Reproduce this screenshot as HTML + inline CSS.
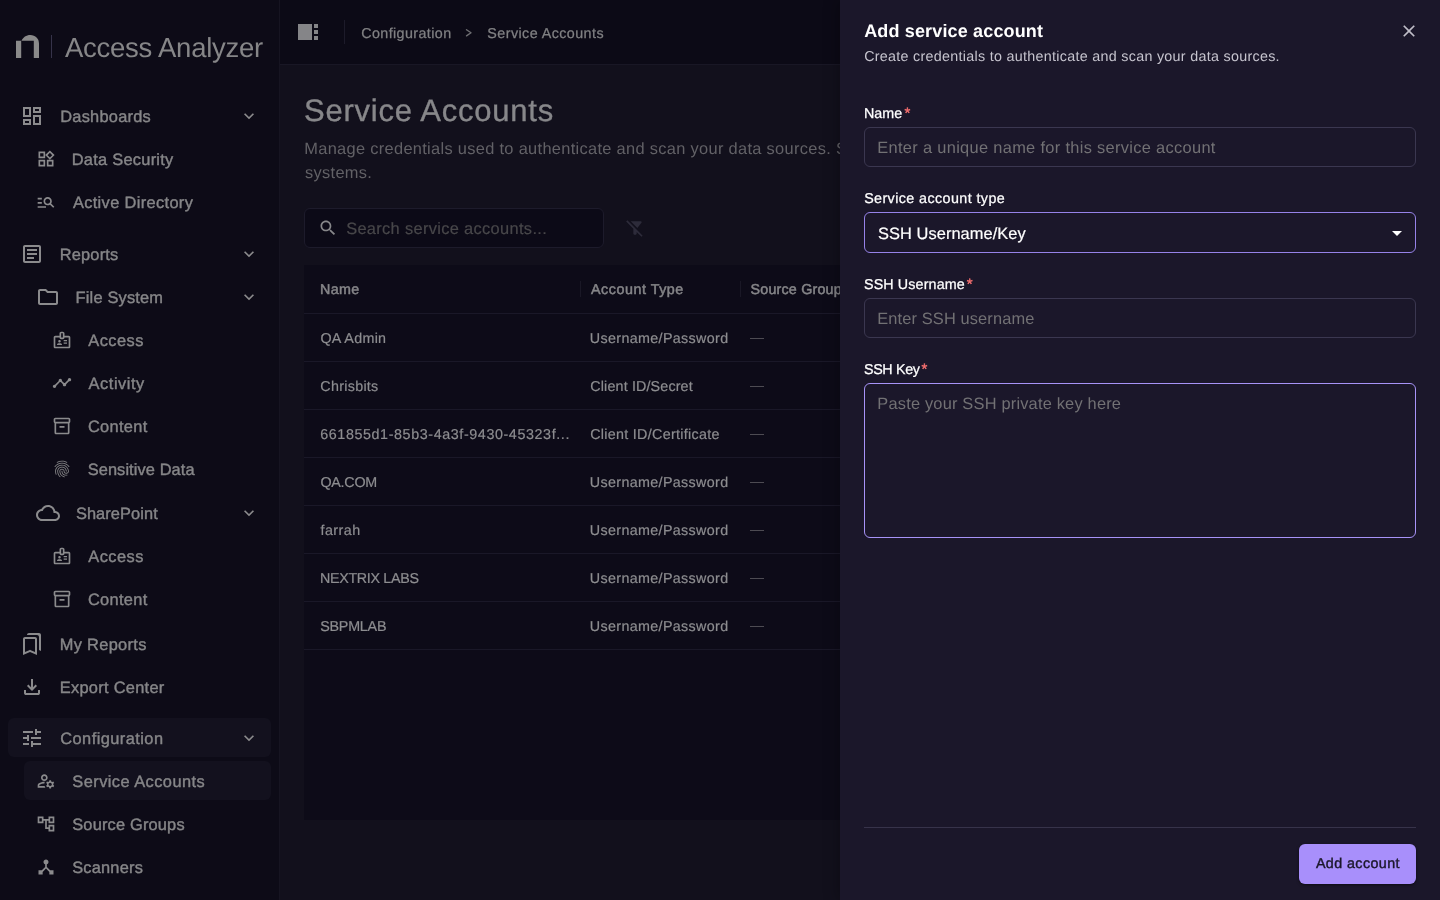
<!DOCTYPE html>
<html lang="en"><head><meta charset="utf-8"><title>Access Analyzer - Service Accounts</title>
<style>
*{box-sizing:border-box;margin:0;padding:0}
html,body{width:1440px;height:900px;overflow:hidden;background:#12101c;font-family:"Liberation Sans",sans-serif;text-rendering:geometricPrecision}
#root{position:absolute;left:0;top:0;width:1440px;height:900px;will-change:transform}
.t{position:absolute;white-space:nowrap;}
.ic{position:absolute;display:block}
#sidebar{position:absolute;left:0;top:0;width:280px;height:900px;background:#0d0b17;border-right:1px solid #161421;color:#8b8b8d;overflow:hidden}
.sbt{font-size:16.4px;line-height:38px;height:38px;font-weight:400;color:#868688;-webkit-text-stroke:0.4px #868688}
.hl{position:absolute;height:38.5px;border-radius:6px;background:#13111e}
#topbar{position:absolute;left:280px;top:0;width:1160px;height:65px;background:#0c0a16;border-bottom:1px solid #191725;color:#858588}
#main{position:absolute;left:280px;top:65px;width:1160px;height:835px;background:#12101c;overflow:hidden}
.bc{font-size:14.3px;line-height:20px;color:#808083;top:23.75px;-webkit-text-stroke:0.25px #808083}
#title{left:24px;top:27.5px;font-size:31px;line-height:36px;color:#87878a;-webkit-text-stroke:0.35px #87878a}
.desc{left:24px;font-size:16.4px;line-height:24px;color:#626166}
#search{position:absolute;left:24px;top:143px;width:300px;height:40px;border:1px solid #1d1b2b;border-radius:6px;background:#0c0a17}
#search .t{left:42px;top:0.9px;line-height:38px;font-size:16.4px;color:#48474a;-webkit-text-stroke:0.2px #48474a}
#table{position:absolute;left:24px;top:200px;width:1112px;height:555px;background:#0d0b18;overflow:hidden}
.th{font-size:14.3px;font-weight:400;color:#858588;line-height:48px;top:0.5px;-webkit-text-stroke:0.5px #858588}
.row{position:absolute;left:0;width:100%;height:1px;background:#1a1828}
.cell{font-size:14.3px;line-height:46px;color:#8d8d90;-webkit-text-stroke:0.2px #8d8d90}
.dsh{color:#535258;-webkit-text-stroke:0;font-size:14px}
.sep{position:absolute;top:16px;width:1.5px;height:16px;background:#1a1826}
#drawer{position:absolute;left:840px;top:0;width:600px;height:900px;background:#1b172a;color:#fff;box-shadow:-2px 0 14px rgba(0,0,0,0.28)}
.lbl{font-size:14.3px;line-height:20px;font-weight:400;color:#fff;left:24px;-webkit-text-stroke:0.25px #fff}
.req{color:#f56f6f;-webkit-text-stroke:0.4px #f56f6f;font-size:15px;line-height:10px;position:relative;top:0.5px;letter-spacing:0;margin-left:2px}
.inp{position:absolute;left:24px;width:552px;height:40px;border:1px solid #3b3750;border-radius:6px;}
.inp .t{left:13px;top:0.5px;line-height:38px;font-size:16.4px;color:#727174}
.focus{border:1px solid #9682e8}
#btn{position:absolute;left:459px;top:844px;width:117px;height:40px;border-radius:6px;background:#a88ffb;box-shadow:0 1px 3px rgba(0,0,0,.5)}
#btn .t{left:16px;top:0.2px;line-height:40px;font-size:14.3px;color:#1b172a;-webkit-text-stroke:0.4px #1b172a}
</style></head>
<body>
<div id="root">
<div id="sidebar">
<svg class="ic" style="left:0;top:0" width="64" height="64" viewBox="0 0 64 64" fill="#8a8a8a"><path d="M16 40.7h5.2V58H16z M21.5 40.8C23 37.300 26.200 35 30.300 35 35.500 35 39 38.600 39 43.500V58h-5.200V40.800z"/></svg>
<div style="position:absolute;left:51px;top:35px;width:1px;height:23px;background:#36334a"></div>
<span class="t" id="brand" style="left:64px;top:28.5px;font-size:27.5px;line-height:38px;color:#868688;letter-spacing:-0.247px;margin-left:0.97px;">Access Analyzer</span>
<svg class="ic" style="left:20px;top:104.0px" width="24" height="24" viewBox="0 0 24 24" fill="currentColor"><path d="M19 5v2h-4V5h4M9 5v6H5V5h4m10 8v6h-4v-6h4M9 17v2H5v-2h4M21 3h-8v6h8V3zM11 3H3v10h8V3zm10 8h-8v10h8V11zm-10 4H3v6h8v-6z"/></svg>
<span class="t sbt" id="sb0" style="left:60px;top:97.75px;letter-spacing:0.243px;margin-left:0.22px;">Dashboards</span>
<svg class="ic" style="left:239px;top:106px" width="20" height="20" viewBox="0 0 24 24" fill="currentColor"><path d="M16.590 8.590L12 13.170 7.410 8.590 6 10l6 6 6-6z"/></svg>
<svg class="ic" style="left:36px;top:149.0px" width="20" height="20" viewBox="0 0 24 24" fill="currentColor"><path d="M16.66 4.52l2.83 2.83-2.83 2.83-2.83-2.83 2.83-2.83M9 5v4H5V5h4m10 10v4h-4v-4h4M9 15v4H5v-4h4m7.66-13.31L11 7.34 16.66 13l5.66-5.66-5.66-5.65zM11 3H3v8h8V3zm10 10h-8v8h8v-8zm-10 0H3v8h8v-8z"/></svg>
<span class="t sbt" id="sb1" style="left:72px;top:140.75px;letter-spacing:0.273px;margin-left:-0.36px;">Data Security</span>
<svg class="ic" style="left:36px;top:192.0px" width="20" height="20" viewBox="0 0 24 24" fill="currentColor"><path d="M7 9H2V7h5v2zm0 3H2v2h5v-2zm13.59 7l-3.83-3.83c-.8.52-1.74.83-2.76.83-2.76 0-5-2.24-5-5s2.24-5 5-5 5 2.24 5 5c0 1.02-.31 1.96-.83 2.75L22 17.59 20.59 19zM17 11c0-1.65-1.35-3-3-3s-3 1.35-3 3 1.35 3 3 3 3-1.35 3-3zM2 19h10v-2H2v2z"/></svg>
<span class="t sbt" id="sb2" style="left:72px;top:183.75px;letter-spacing:0.345px;margin-left:0.91px;">Active Directory</span>
<svg class="ic" style="left:20px;top:242.0px" width="24" height="24" viewBox="0 0 24 24" fill="currentColor"><path d="M19 5v14H5V5h14m0-2H5c-1.1 0-2 .9-2 2v14c0 1.1.9 2 2 2h14c1.1 0 2-.9 2-2V5c0-1.1-.9-2-2-2zm-5 14H7v-2h7v2zm3-4H7v-2h10v2zm0-4H7V7h10v2z"/></svg>
<span class="t sbt" id="sb3" style="left:60px;top:235.75px;letter-spacing:0.185px;margin-left:-0.28px;">Reports</span>
<svg class="ic" style="left:239px;top:244px" width="20" height="20" viewBox="0 0 24 24" fill="currentColor"><path d="M16.590 8.590L12 13.170 7.410 8.590 6 10l6 6 6-6z"/></svg>
<svg class="ic" style="left:36px;top:285.0px" width="24" height="24" viewBox="0 0 24 24" fill="currentColor"><path d="M9.17 6l2 2H20v10H4V6h5.17M10 4H4c-1.1 0-1.99.9-1.99 2L2 18c0 1.1.9 2 2 2h16c1.1 0 2-.9 2-2V8c0-1.1-.9-2-2-2h-8l-2-2z"/></svg>
<span class="t sbt" id="sb4" style="left:76px;top:278.75px;letter-spacing:0.181px;margin-left:-0.43px;">File System</span>
<svg class="ic" style="left:239px;top:287px" width="20" height="20" viewBox="0 0 24 24" fill="currentColor"><path d="M16.590 8.590L12 13.170 7.410 8.590 6 10l6 6 6-6z"/></svg>
<svg class="ic" style="left:52px;top:330.0px" width="20" height="20" viewBox="0 0 24 24" fill="currentColor"><path d="M14 12h4v1.5h-4zm0 3h4v1.5h-4zM20 7h-5V4c0-1.1-.9-2-2-2h-2c-1.1 0-2 .9-2 2v3H4c-1.1 0-2 .9-2 2v11c0 1.1.9 2 2 2h16c1.1 0 2-.9 2-2V9c0-1.1-.9-2-2-2zm-9-3h2v5h-2V4zm9 16H4V9h5c0 1.1.9 2 2 2h2c1.1 0 2-.9 2-2h5v11zM9 15c.83 0 1.5-.67 1.5-1.5S9.83 12 9 12s-1.5.67-1.5 1.5S8.17 15 9 15zm2.08 1.18c-.64-.28-1.34-.43-2.08-.43s-1.44.15-2.08.43c-.56.24-.92.78-.92 1.39V18h6v-.43c0-.61-.36-1.15-.92-1.39z"/></svg>
<span class="t sbt" id="sb5" style="left:88px;top:321.75px;letter-spacing:0.433px;margin-left:0.37px;">Access</span>
<svg class="ic" style="left:52px;top:373.0px" width="20" height="20" viewBox="0 0 24 24" fill="currentColor"><path d="M23 8c0 1.1-.9 2-2 2-.18 0-.35-.02-.51-.07l-3.56 3.55c.05.16.07.34.07.52 0 1.1-.9 2-2 2s-2-.9-2-2c0-.18.02-.36.07-.52l-2.55-2.55c-.16.05-.34.07-.52.07s-.36-.02-.52-.07l-4.55 4.56c.05.16.07.33.07.51 0 1.1-.9 2-2 2s-2-.9-2-2 .9-2 2-2c.18 0 .35.02.51.07l4.56-4.55C8.020 9.36 8 9.18 8 9c0-1.1.9-2 2-2s2 .9 2 2c0 .18-.02.36-.07.52l2.55 2.55c.16-.05.34-.07.52-.07s.36.02.52.07l3.55-3.56C19.020 8.35 19 8.18 19 8c0-1.1.9-2 2-2s2 .9 2 2z"/></svg>
<span class="t sbt" id="sb6" style="left:88px;top:364.75px;letter-spacing:0.537px;margin-left:0.62px;">Activity</span>
<svg class="ic" style="left:52px;top:416.0px" width="20" height="20" viewBox="0 0 24 24" fill="currentColor"><path d="M20 2H4c-1 0-2 .9-2 2v3.010c0 .72.43 1.34 1 1.69V20c0 1.1 1.1 2 2 2h14c.9 0 2-.9 2-2V8.700c.57-.35 1-.97 1-1.69V4c0-1.1-1-2-2-2zm-1 18H5V9h14v11zm1-13H4V4h16v3zM9 12h6v2H9z"/></svg>
<span class="t sbt" id="sb7" style="left:88px;top:407.75px;letter-spacing:0.331px;margin-left:-0.09px;">Content</span>
<svg class="ic" style="left:52px;top:459.0px" width="20" height="20" viewBox="0 0 24 24" fill="currentColor"><path d="M17.81 4.47c-.08 0-.16-.02-.23-.06C15.66 3.42 14 3 12.01 3c-1.98 0-3.86.47-5.570 1.410-.24.13-.54.04-.68-.2-.13-.24-.04-.55.2-.68C7.820 2.520 9.860 2 12.010 2c2.130 0 3.990.47 6.030 1.520.25.13.34.43.21.67-.09.18-.26.28-.44.28zM3.5 9.720c-.1 0-.2-.03-.29-.09-.23-.16-.28-.47-.12-.7.99-1.400 2.250-2.500 3.750-3.270C9.980 4.040 14 4.030 17.150 5.650c1.500.77 2.760 1.860 3.750 3.250.16.22.11.54-.12.7-.23.16-.54.11-.7-.12-.9-1.260-2.040-2.250-3.390-2.940-2.870-1.470-6.540-1.470-9.400.01-1.360.7-2.500 1.700-3.400 2.960-.8.14-.23.21-.39.21zm6.250 12.070c-.13 0-.26-.05-.35-.15-.87-.87-1.340-1.430-2.010-2.640-.69-1.230-1.050-2.730-1.050-4.340 0-2.970 2.540-5.390 5.660-5.390s5.660 2.420 5.660 5.390c0 .28-.22.5-.5.5s-.5-.22-.5-.5c0-2.420-2.090-4.390-4.660-4.390-2.570 0-4.660 1.970-4.660 4.390 0 1.440.32 2.770.93 3.850.64 1.150 1.080 1.640 1.850 2.420.19.2.19.51 0 .71-.11.1-.24.15-.37.15zm7.170-1.850c-1.190 0-2.240-.3-3.100-.89-1.490-1.010-2.380-2.650-2.380-4.390 0-.28.22-.5.5-.5s.5.22.5.5c0 1.410.72 2.740 1.940 3.560.71.48 1.540.71 2.540.71.24 0 .64-.03 1.040-.1.27-.05.53.13.58.41.05.27-.13.53-.41.58-.57.11-1.070.12-1.210.12zM14.91 22c-.04 0-.09-.01-.13-.02-1.590-.44-2.630-1.030-3.720-2.100-1.400-1.390-2.170-3.240-2.170-5.220 0-1.620 1.380-2.940 3.080-2.940 1.700 0 3.080 1.320 3.080 2.940 0 1.070.93 1.940 2.080 1.940s2.080-.87 2.080-1.940c0-3.770-3.250-6.830-7.250-6.830-2.840 0-5.440 1.580-6.610 4.030-.39.81-.59 1.760-.59 2.800 0 .78.07 2.010.67 3.610.1.26-.03.55-.29.64-.26.1-.55-.04-.64-.29-.49-1.310-.73-2.610-.73-3.960 0-1.200.23-2.290.68-3.240 1.330-2.790 4.280-4.600 7.510-4.600 4.550 0 8.250 3.510 8.250 7.830 0 1.620-1.380 2.940-3.080 2.940s-3.080-1.320-3.080-2.940c0-1.070-.93-1.940-2.080-1.940s-2.080.87-2.080 1.940c0 1.710.66 3.310 1.870 4.510.95.94 1.860 1.460 3.270 1.850.27.07.42.35.35.61-.05.23-.26.38-.47.38z"/></svg>
<span class="t sbt" id="sb8" style="left:88px;top:450.75px;letter-spacing:0.091px;margin-left:-0.35px;">Sensitive Data</span>
<svg class="ic" style="left:36px;top:501.0px" width="24" height="24" viewBox="0 0 24 24" fill="currentColor"><path d="M19.35 10.040C18.67 6.590 15.64 4 12 4 9.110 4 6.600 5.640 5.350 8.040 2.340 8.360 0 10.910 0 14c0 3.310 2.690 6 6 6h13c2.760 0 5-2.240 5-5 0-2.640-2.050-4.780-4.650-4.960zM19 18H6c-2.210 0-4-1.790-4-4s1.790-4 4-4h.710C7.370 7.690 9.480 6 12 6c3.040 0 5.500 2.460 5.500 5.500v.5H19c1.660 0 3 1.340 3 3s-1.340 3-3 3z"/></svg>
<span class="t sbt" id="sb9" style="left:76px;top:494.75px;letter-spacing:0.077px;margin-left:-0.08px;">SharePoint</span>
<svg class="ic" style="left:239px;top:503px" width="20" height="20" viewBox="0 0 24 24" fill="currentColor"><path d="M16.590 8.590L12 13.170 7.410 8.590 6 10l6 6 6-6z"/></svg>
<svg class="ic" style="left:52px;top:546.0px" width="20" height="20" viewBox="0 0 24 24" fill="currentColor"><path d="M14 12h4v1.5h-4zm0 3h4v1.5h-4zM20 7h-5V4c0-1.1-.9-2-2-2h-2c-1.1 0-2 .9-2 2v3H4c-1.1 0-2 .9-2 2v11c0 1.1.9 2 2 2h16c1.1 0 2-.9 2-2V9c0-1.1-.9-2-2-2zm-9-3h2v5h-2V4zm9 16H4V9h5c0 1.1.9 2 2 2h2c1.1 0 2-.9 2-2h5v11zM9 15c.83 0 1.5-.67 1.5-1.5S9.83 12 9 12s-1.5.67-1.5 1.5S8.17 15 9 15zm2.08 1.18c-.64-.28-1.34-.43-2.08-.43s-1.44.15-2.08.43c-.56.24-.92.78-.92 1.39V18h6v-.43c0-.61-.36-1.15-.92-1.39z"/></svg>
<span class="t sbt" id="sb10" style="left:88px;top:537.75px;letter-spacing:0.433px;margin-left:0.37px;">Access</span>
<svg class="ic" style="left:52px;top:589.0px" width="20" height="20" viewBox="0 0 24 24" fill="currentColor"><path d="M20 2H4c-1 0-2 .9-2 2v3.010c0 .72.43 1.34 1 1.69V20c0 1.1 1.1 2 2 2h14c.9 0 2-.9 2-2V8.700c.57-.35 1-.97 1-1.69V4c0-1.1-1-2-2-2zm-1 18H5V9h14v11zm1-13H4V4h16v3zM9 12h6v2H9z"/></svg>
<span class="t sbt" id="sb11" style="left:88px;top:580.75px;letter-spacing:0.331px;margin-left:-0.09px;">Content</span>
<svg class="ic" style="left:20px;top:632.0px" width="24" height="24" viewBox="0 0 24 24" fill="currentColor"><path d="M15 7v12.970l-4.210-1.810-.79-.34-.79.34L5 19.970V7h10m4-6H8.990C7.890 1 7 1.900 7 3h10c1.100 0 2 .9 2 2v13l2 1V3c0-1.100-.9-2-2-2zm-4 4H5c-1.100 0-2 .9-2 2v16l7-3 7 3V7c0-1.100-.9-2-2-2z"/></svg>
<span class="t sbt" id="sb12" style="left:60px;top:625.75px;letter-spacing:0.315px;margin-left:-0.26px;">My Reports</span>
<svg class="ic" style="left:20px;top:675.0px" width="24" height="24" viewBox="0 0 24 24" fill="currentColor"><path d="M12 16l-5-5 1.400-1.450 2.600 2.600V4h2v8.150l2.600-2.600L17 11zm-6 4q-.825 0-1.412-.587T4 18v-3h2v3h12v-3h2v3q0 .825-.587 1.413T18 20z"/></svg>
<span class="t sbt" id="sb13" style="left:60px;top:668.75px;letter-spacing:0.288px;margin-left:-0.25px;">Export Center</span>
<div class="hl" style="left:8px;top:718.25px;width:263px"></div>
<svg class="ic" style="left:20px;top:726.0px" width="24" height="24" viewBox="0 0 24 24" fill="currentColor"><path d="M3 17v2h6v-2H3zM3 5v2h10V5H3zm10 16v-2h8v-2h-8v-2h-2v6h2zM7 9v2H3v2h4v2h2V9H7zm14 4v-2H11v2h10zm-6-4h2V7h4V5h-4V3h-2v6z"/></svg>
<span class="t sbt" id="sb14" style="left:60px;top:719.75px;letter-spacing:0.438px;margin-left:0.29px;">Configuration</span>
<svg class="ic" style="left:239px;top:728px" width="20" height="20" viewBox="0 0 24 24" fill="currentColor"><path d="M16.590 8.590L12 13.170 7.410 8.590 6 10l6 6 6-6z"/></svg>
<div class="hl" style="left:24px;top:761.25px;width:247px"></div>
<svg class="ic" style="left:36px;top:771.0px" width="20" height="20" viewBox="0 0 24 24" fill="currentColor"><path d="M4 18v-.65c0-.34.16-.66.41-.81C6.100 15.530 8.030 15 10 15c.03 0 .05 0 .08.010.1-.7.3-1.370.59-1.980-.22-.02-.44-.03-.67-.03-2.420 0-4.680.67-6.610 1.820-.88.520-1.390 1.500-1.390 2.530V20h9.260c-.42-.6-.75-1.280-.97-2H4zm6-6c2.210 0 4-1.790 4-4s-1.790-4-4-4-4 1.790-4 4 1.790 4 4 4zm0-6c1.100 0 2 .9 2 2s-.9 2-2 2-2-.9-2-2 .9-2 2-2zm10.750 10c0-.22-.03-.42-.06-.63l1.140-1.010-1-1.730-1.450.49c-.32-.27-.68-.48-1.080-.63L18 11h-2l-.3 1.490c-.4.15-.76.36-1.080.63l-1.450-.49-1 1.730 1.140 1.010c-.03.21-.06.41-.06.63s.03.420.06.630l-1.140 1.010 1 1.730 1.450-.49c.32.27.68.48 1.080.63L16 21h2l.3-1.490c.4-.15.76-.36 1.080-.63l1.450.49 1-1.730-1.140-1.010c.03-.21.06-.41.06-.63zM17 18c-1.100 0-2-.9-2-2s.9-2 2-2 2 .9 2 2-.9 2-2 2z"/></svg>
<span class="t sbt" id="sb15" style="left:72px;top:762.75px;letter-spacing:0.453px;margin-left:0.28px;">Service Accounts</span>
<svg class="ic" style="left:36px;top:814.0px" width="20" height="20" viewBox="0 0 24 24" fill="currentColor"><path d="M22 11V3h-7v3H9V3H2v8h7V8h2v10h4v3h7v-8h-7v3h-2V8h2v3h7zM7 9H4V5h3v4zm10 6h3v4h-3v-4zm0-10h3v4h-3V5z"/></svg>
<span class="t sbt" id="sb16" style="left:72px;top:805.75px;letter-spacing:0.177px;margin-left:0.26px;">Source Groups</span>
<svg class="ic" style="left:36px;top:857.0px" width="20" height="20" viewBox="0 0 24 24" fill="currentColor"><path d="M17 16l-4-4V8.820C14.160 8.400 15 7.300 15 6c0-1.660-1.340-3-3-3S9 4.340 9 6c0 1.300.84 2.400 2 2.820V12l-4 4H3v5h5v-3.050l4-4.200 4 4.200V21h5v-5h-4z"/></svg>
<span class="t sbt" id="sb17" style="left:72px;top:848.75px;letter-spacing:0.197px;margin-left:0.21px;">Scanners</span>
</div>
<div id="topbar">
<svg class="ic" style="left:18px;top:24px" width="20" height="16" viewBox="0 0 20 16" fill="#858588"><rect x="0" y="0" width="14" height="16"/><rect x="16" y="0" width="4" height="4"/><rect x="16" y="6" width="4" height="4"/><rect x="16" y="12" width="4" height="4"/></svg>
<div style="position:absolute;left:64px;top:20px;width:1px;height:24px;background:#1d1b2a"></div>
<span class="t bc" id="bc1" style="left:81px;letter-spacing:0.406px;margin-left:0.20px;">Configuration</span>
<svg class="ic" style="left:180px;top:24px" width="16" height="16" viewBox="0 0 16 16" fill="none" stroke="#6f6f73" stroke-width="1.35" stroke-linecap="round" stroke-linejoin="round"><path d="M6.5 5.7L11 8.800 6.5 11.900"/></svg>
<span class="t bc" id="bc2" style="left:207px;letter-spacing:0.437px;margin-left:0.33px;">Service Accounts</span>
</div>
<div id="main">
<span class="t" id="title" style="letter-spacing:0.756px;margin-left:0.06px;">Service Accounts</span>
<span class="t desc" style="top:71.75px;letter-spacing:0.314px;margin-left:0.27px;"><span id="d1">Manage credentials used to authenticate and scan your data sources.</span> Service accounts connect to your</span>
<span class="t desc" id="d2" style="top:95.75px;letter-spacing:0.319px;margin-left:0.97px;">systems.</span>
<div id="search"><svg class="ic" style="left:12.5px;top:9px" width="20" height="20" viewBox="0 0 24 24" fill="#87878a"><path d="M15.5 14h-.79l-.28-.27C15.410 12.590 16 11.110 16 9.500 16 5.910 13.090 3 9.500 3S3 5.910 3 9.500 5.910 16 9.500 16c1.610 0 3.090-.59 4.230-1.570l.27.28v.79l5 4.990L20.490 19l-4.990-5zm-6 0C7.010 14 5 11.990 5 9.500S7.010 5 9.500 5 14 7.010 14 9.500 11.990 14 9.500 14z"/></svg><span class="t" id="sph" style="letter-spacing:0.335px;margin-left:-0.88px;">Search service accounts...</span></div>
<svg class="ic" style="left:345px;top:153px" width="20" height="20" viewBox="0 0 24 24" fill="#2d2b3a"><path d="M19.790 5.610C20.300 4.950 19.830 4 19 4H6.830l7.970 7.970 4.990-6.360zM2.810 2.810L1.390 4.220 10 13v6c0 .55.45 1 1 1h2c.55 0 1-.45 1-1v-2.170l5.780 5.780 1.410-1.410L2.810 2.810z"/></svg>
<div id="table">
<span class="t th" id="th1" style="left:16px;letter-spacing:0.314px;margin-left:0.06px;">Name</span>
<span class="t th" id="th2" style="left:286px;letter-spacing:0.540px;margin-left:0.96px;">Account Type</span>
<span class="t th" style="left:446px;letter-spacing:0.196px;margin-left:0.54px;">Source Groups</span>
<div class="sep" style="left:275.5px"></div><div class="sep" style="left:435.5px"></div>
<div class="row" style="top:48px"></div>
<span class="t cell" id="rn0" style="left:16px;top:51px;letter-spacing:0.302px;margin-left:0.38px;">QA Admin</span>
<span class="t cell" id="rt0" style="left:286px;top:51px;letter-spacing:0.354px;margin-left:-0.23px;">Username/Password</span>
<span class="t cell dsh" style="left:446px;top:49px">&mdash;</span>
<div class="row" style="top:96px"></div>
<span class="t cell" id="rn1" style="left:16px;top:99px;letter-spacing:0.289px;margin-left:0.34px;">Chrisbits</span>
<span class="t cell" id="rt1" style="left:286px;top:99px;letter-spacing:0.152px;margin-left:0.30px;">Client ID/Secret</span>
<span class="t cell dsh" style="left:446px;top:97px">&mdash;</span>
<div class="row" style="top:144px"></div>
<span class="t cell" id="rn2" style="left:16px;top:147px;letter-spacing:0.607px;margin-left:0.21px;">661855d1-85b3-4a3f-9430-45323f...</span>
<span class="t cell" id="rt2" style="left:286px;top:147px;letter-spacing:0.300px;margin-left:0.23px;">Client ID/Certificate</span>
<span class="t cell dsh" style="left:446px;top:145px">&mdash;</span>
<div class="row" style="top:192px"></div>
<span class="t cell" id="rn3" style="left:16px;top:195px;letter-spacing:-0.226px;margin-left:0.38px;">QA.COM</span>
<span class="t cell" id="rt3" style="left:286px;top:195px;letter-spacing:0.354px;margin-left:-0.23px;">Username/Password</span>
<span class="t cell dsh" style="left:446px;top:193px">&mdash;</span>
<div class="row" style="top:240px"></div>
<span class="t cell" id="rn4" style="left:16px;top:243px;letter-spacing:0.446px;margin-left:0.51px;">farrah</span>
<span class="t cell" id="rt4" style="left:286px;top:243px;letter-spacing:0.354px;margin-left:-0.23px;">Username/Password</span>
<span class="t cell dsh" style="left:446px;top:241px">&mdash;</span>
<div class="row" style="top:288px"></div>
<span class="t cell" id="rn5" style="left:16px;top:291px;letter-spacing:-0.317px;margin-left:-0.06px;">NEXTRIX LABS</span>
<span class="t cell" id="rt5" style="left:286px;top:291px;letter-spacing:0.354px;margin-left:-0.23px;">Username/Password</span>
<span class="t cell dsh" style="left:446px;top:289px">&mdash;</span>
<div class="row" style="top:336px"></div>
<span class="t cell" id="rn6" style="left:16px;top:339px;letter-spacing:-0.204px;margin-left:0.18px;">SBPMLAB</span>
<span class="t cell" id="rt6" style="left:286px;top:339px;letter-spacing:0.354px;margin-left:-0.23px;">Username/Password</span>
<span class="t cell dsh" style="left:446px;top:337px">&mdash;</span>
<div class="row" style="top:384px"></div>
</div>
</div>
<div id="drawer">
<span class="t" id="dt" style="left:24px;top:17px;font-size:18px;line-height:28px;font-weight:700;letter-spacing:0.156px;margin-left:0.14px;">Add service account</span>
<span class="t" id="ds" style="left:24px;top:46.9px;font-size:14.3px;line-height:20px;color:#c6c4ce;letter-spacing:0.296px;margin-left:0.13px;">Create credentials to authenticate and scan your data sources.</span>
<svg class="ic" style="left:559px;top:21px" width="20" height="20" viewBox="0 0 24 24" fill="#c0bec8"><path d="M19 6.410L17.590 5 12 10.590 6.410 5 5 6.410 10.590 12 5 17.590 6.410 19 12 13.410 17.590 19 19 17.590 13.410 12z"/></svg>
<span class="t lbl" style="top:103.7px;letter-spacing:0.087px;margin-left:-0.09px;"><span id="l1">Name</span><span class="req">*</span></span>
<div class="inp" style="top:127px"><span class="t" id="p1" style="letter-spacing:0.319px;margin-left:-0.70px;">Enter a unique name for this service account</span></div>
<span class="t lbl" id="l2" style="top:188.8px;letter-spacing:0.416px;margin-left:0.13px;">Service account type</span>
<div class="inp focus" style="top:212px;height:41px"><span class="t" id="p2" style="color:#fff;-webkit-text-stroke:0.2px #fff;top:2px;line-height:39px;letter-spacing:0.059px;margin-left:0.08px;">SSH Username/Key</span>
<svg class="ic" style="left:520px;top:8px" width="24" height="24" viewBox="0 0 24 24" fill="#fff"><path d="M7 10l5 5 5-5z"/></svg></div>
<span class="t lbl" style="top:274.75px;letter-spacing:0.131px;margin-left:-0.04px;"><span id="l3">SSH Username</span><span class="req">*</span></span>
<div class="inp" style="top:298px"><span class="t" id="p3" style="letter-spacing:0.123px;margin-left:-0.70px;">Enter SSH username</span></div>
<span class="t lbl" style="top:359.75px;letter-spacing:-0.349px;margin-left:-0.01px;"><span id="l4">SSH Key</span><span class="req">*</span></span>
<div class="inp focus" style="top:383px;height:155px;border-color:#a793f7"><span class="t" id="p4" style="top:1px;line-height:38px;letter-spacing:0.196px;margin-left:-0.70px;">Paste your SSH private key here</span></div>
<div style="position:absolute;left:24px;top:827px;width:552px;height:1px;background:#37334a"></div>
<div id="btn"><span class="t" id="bt" style="letter-spacing:0.420px;margin-left:0.89px;">Add account</span></div>
</div>
</div>
</body></html>
